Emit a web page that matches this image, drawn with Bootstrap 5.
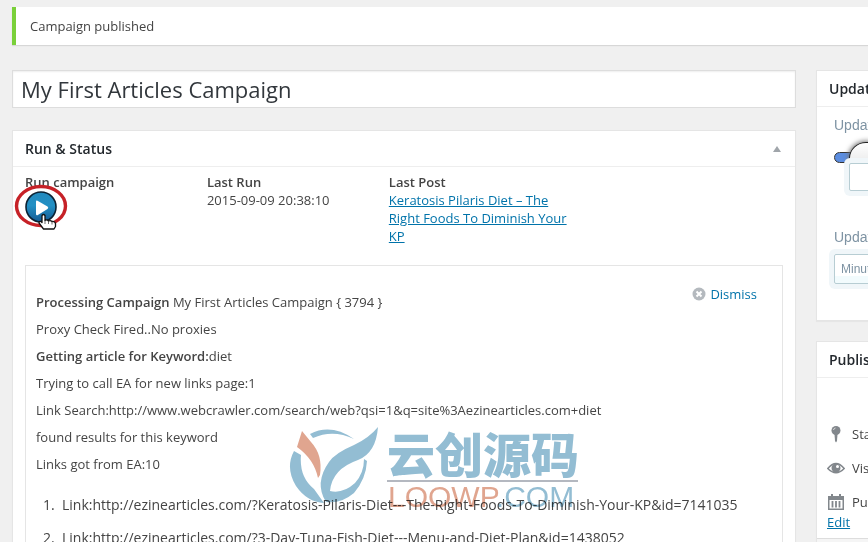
<!DOCTYPE html>
<html lang="en">
<head>
<meta charset="utf-8">
<meta name="viewport" content="width=device-width, initial-scale=1">
<title>Edit Campaign</title>
<link href="https://cdn.jsdelivr.net/npm/bootstrap@5.3.0/dist/css/bootstrap.min.css" rel="stylesheet">
<style>
body{background:#f0f0f0;color:#444;font-family:"Open Sans",sans-serif;font-size:13px;line-height:18px;height:100vh;overflow:hidden}
a{color:#0073aa}
strong{font-weight:600}
.notice{background:#fff;border-left:4px solid #7ad03a;box-shadow:0 1px 1px rgba(0,0,0,.1);padding:10px 14px;margin:7px 0 25px 12px}
.layout{padding-left:12px;gap:20px}
.side-area{flex:0 0 280px;margin-right:-228px}
.title-field{border:1px solid #ddd;border-radius:0;box-shadow:inset 0 1px 2px rgba(0,0,0,.07);color:#32373c;font-size:22px;line-height:28px;padding:4px 8px;height:38px;margin-bottom:22px}
.panel{background:#fff;border:1px solid #e5e5e5;box-shadow:0 1px 1px rgba(0,0,0,.04)}
.panel-title{font-size:14px;line-height:19px;font-weight:600;color:#23282d;padding:8px 12px;border-bottom:1px solid #eee;margin:0}
.toggle-btn{border:0;background:none;padding:0 2px 0 0;line-height:0}
.status-row{padding:6px 12px 0}
.status-cell{width:24%}
.play-btn{border:0;background:none;padding:0;width:32px;height:32px;display:block;line-height:0}
.ring{left:-12px;top:8px;pointer-events:none}
.log{border:1px solid #e5e5e5;margin:20px 12px 12px;padding:26px 10px 0}
.log p{line-height:20px;margin:0 0 7px}
.log ol{font-size:14px;line-height:20px;padding-left:26px;margin:21px 0 0}
.log li{margin-bottom:13px}
.log li::marker{content:counter(list-item) ".\a0\a0"}
.dismiss{right:25px;top:19px;gap:4px}
.watermark{left:261px;top:160px;pointer-events:none;mix-blend-mode:multiply}
.wm-words{left:100px;top:-2px;width:191px}
.wm-cn{font:900 48px/56px "Noto Sans CJK SC",sans-serif;color:#93bdd3;white-space:nowrap}
.wm-en{font:30px/30px "Liberation Sans",sans-serif;color:#93bdd3;border-top:2px solid #b4b8c0;padding-left:1px}
.wm-en span{color:#e0a58f}
.options{font-family:"Liberation Sans",sans-serif;color:#7e93a3;padding:9px 17px 36px;font-size:14px}
.options label{line-height:18px;display:block}
.glow{border:1px solid #b7cdd3;border-radius:2px;box-shadow:0 0 0 5px #f0f6f9;font:12px "Liberation Sans",sans-serif;color:#7e93a3;background:#fff}
.num{width:80px;height:28px;margin:0 0 37px 15px;padding:0 18px;position:relative;display:block}
.unit{appearance:none;width:120px;height:30px;padding:0 6px;margin-top:8px;display:block;background:linear-gradient(#fff 75%,#f2fbfd 75%)}
.slide{appearance:none;display:block;width:240px;height:32px;margin:7px 0 -10px;background:none}
.slide::-webkit-slider-runnable-track{height:11px;border:1px solid #333;border-radius:6px;background:linear-gradient(90deg,#5b8de0 30px,#ddd 30px)}
.slide::-webkit-slider-thumb{appearance:none;width:34px;height:32px;margin-top:-11px;border:1px solid #222;border-radius:50%;background:linear-gradient(#fff,#e0e0e0);box-shadow:0 0 5px 1px #777}
#update-panel{margin-bottom:20px}
.publish-list{padding:39px 10px 7px}
.publish-item{height:34px;gap:7px;white-space:nowrap}
.edit-link{display:block;width:max-content;line-height:18px;margin-top:-6px}
.panel-foot{background:#f5f5f5;border-top:1px solid #ddd;height:50px}
</style>
<script src="https://cdn.jsdelivr.net/npm/bootstrap@5.3.0/dist/js/bootstrap.bundle.min.js"></script>
</head>
<body>
<div class="notice" role="status">Campaign published</div>
<div class="layout d-flex align-items-start">
  <main class="flex-grow-1">
    <input class="title-field w-100 d-block" type="text" aria-label="Campaign title" value="My First Articles Campaign">
    <section class="panel">
      <h2 class="panel-title d-flex justify-content-between align-items-center">Run &amp; Status
        <button class="toggle-btn" type="button" aria-label="Toggle panel"><svg width="8" height="6" viewBox="0 0 8 6"><path d="M4 0L8 6H0Z" fill="#a0a5aa"/></svg></button></h2>
      <div class="status-row d-flex">
        <div class="status-cell position-relative"><strong>Run campaign</strong>
          <button class="play-btn" type="button" aria-label="Run campaign">
            <svg width="32" height="32" viewBox="0 0 32 32"><defs><linearGradient id="pg" x2="0" y2="1"><stop stop-color="#2389bd"/><stop offset=".45" stop-color="#2290c4"/><stop offset="1" stop-color="#155b94"/></linearGradient></defs><circle cx="16" cy="16" r="15" fill="url(#pg)" stroke="#0b2233" stroke-width="1.6"/><path d="M11 10.500Q11 9 12.500 9.800L22.500 15.500Q24 16.800 22.500 18L12.500 24.200Q11 24.700 11 23Z" fill="#fff"/></svg>
          </button>
          <svg class="ring position-absolute" width="56" height="50" viewBox="0 0 56 50"><ellipse cx="28" cy="25" rx="24.500" ry="19.500" fill="none" stroke="#c62127" stroke-width="3.400"/><path d="M29 34.500q1.500-2 3 0v5q2-1.500 3.500.5 2-1 3.500.5 3-.5 3.500 2v3l-1.500 2.500H30.500l-4.500-6q0-2 2-1.500l1 1z" fill="#fff" stroke="#111" stroke-width="1.300" stroke-linejoin="round"/><path d="M32 39v4M35.500 40v3M39 40.500v3" stroke="#444" stroke-width=".8"/></svg>
        </div>
        <div class="status-cell"><strong>Last Run</strong><br>2015-09-09 20:38:10</div>
        <div class="status-cell"><strong>Last Post</strong><br><a href="#">Keratosis Pilaris Diet – The Right Foods To Diminish Your KP</a></div>
      </div>
      <div class="log position-relative">
        <a class="dismiss position-absolute d-flex align-items-center text-decoration-none" href="#"><svg width="14" height="14" viewBox="0 0 14 14"><circle cx="7" cy="7" r="6.500" fill="#b4b9be"/><path d="M4.500 4.500l5 5m0-5l-5 5" stroke="#fff" stroke-width="2"/></svg>Dismiss</a>
        <p><strong>Processing Campaign</strong> My First Articles Campaign { 3794 }</p>
        <p>Proxy Check Fired..No proxies</p>
        <p><strong>Getting article for Keyword:</strong>diet</p>
        <p>Trying to call EA for new links page:1</p>
        <p>Link Search:http://www.webcrawler.com/search/web?qsi=1&amp;q=site%3Aezinearticles.com+diet</p>
        <p>found results for this keyword</p>
        <p>Links got from EA:10</p>
        <ol>
          <li>Link:http://ezinearticles.com/?Keratosis-Pilaris-Diet---The-Right-Foods-To-Diminish-Your-KP&amp;id=7141035</li>
          <li>Link:http://ezinearticles.com/?3-Day-Tuna-Fish-Diet---Menu-and-Diet-Plan&amp;id=1438052</li>
        </ol>
        <div class="watermark position-absolute" aria-hidden="true">
          <svg class="d-block" width="92" height="82" viewBox="0 0 92 82" fill="#93bdd3"><path d="M15 5L24 16Q36 29 33 49L31 52Q27 33 10 21Z" fill="#e0a58f"/><path d="M23 8Q44-3 67 13Q46 3 26 12Z"/><path d="M91 1Q89 27 71 34Q45 43 43 65Q56 68 68 57Q77 47 77 33L80 35Q79 53 67 67Q54 78 39 76Q27 57 42 36Q48 27 67 19Q82 12 91 1Z"/><path d="M7 25L14 29Q12 51 27 63L37 77Q20 76 9 60Q-2 42 7 25Z"/></svg>
          <div class="wm-words position-absolute"><div class="wm-cn">云创源码</div><div class="wm-en"><span>LOOWP</span>.COM</div></div>
        </div>
      </div>
    </section>
  </main>
  <aside class="side-area">
    <section class="panel" id="update-panel">
      <h2 class="panel-title">Update</h2>
      <div class="options">
        <label for="every">Update</label>
        <input class="slide" id="every" type="range" min="0" max="100" value="7">
        <input class="glow num" type="text" aria-label="Interval" value="">
        <label for="unit">Update</label>
        <select class="glow unit" id="unit"><option>Minutes</option></select>
      </div>
    </section>
    <section class="panel">
      <h2 class="panel-title">Publish</h2>
      <div class="publish-list">
        <div class="publish-item d-flex align-items-center"><svg width="18" height="18" viewBox="0 0 18 18"><circle cx="9" cy="5.500" r="4.500" fill="#82878c"/><path d="M7.500 9h3l-.5 7-1 1.500-1-1.500z" fill="#82878c"/><path d="M6.500 5q.5-2 2-2" stroke="#ddd" fill="none"/></svg>Status:</div>
        <div class="publish-item d-flex align-items-center"><svg width="18" height="18" viewBox="0 0 18 18"><path d="M.8 9.500Q9-.5 17.200 9.500Q9 18 .8 9.500Z" fill="none" stroke="#82878c" stroke-width="1.500"/><circle cx="9" cy="9" r="4.500" fill="#82878c"/><circle cx="10.500" cy="7.500" r="1.500" fill="#fff"/></svg>Visibility:</div>
        <div class="publish-item d-flex align-items-center"><svg width="18" height="18" viewBox="0 0 18 18"><path d="M1 3h3V1h2v2h6V1h2v2h3v14H1zM2.500 7v8.500h13V7z" fill="#82878c" fill-rule="evenodd"/><path d="M5.500 8v6.500M9 8v6.500M12.500 8v6.500" stroke="#82878c" stroke-width="1.800"/></svg>Published</div>
        <a class="edit-link" href="#">Edit</a>
      </div>
      <div class="panel-foot"></div>
    </section>
  </aside>
</div>
</body>
</html>
